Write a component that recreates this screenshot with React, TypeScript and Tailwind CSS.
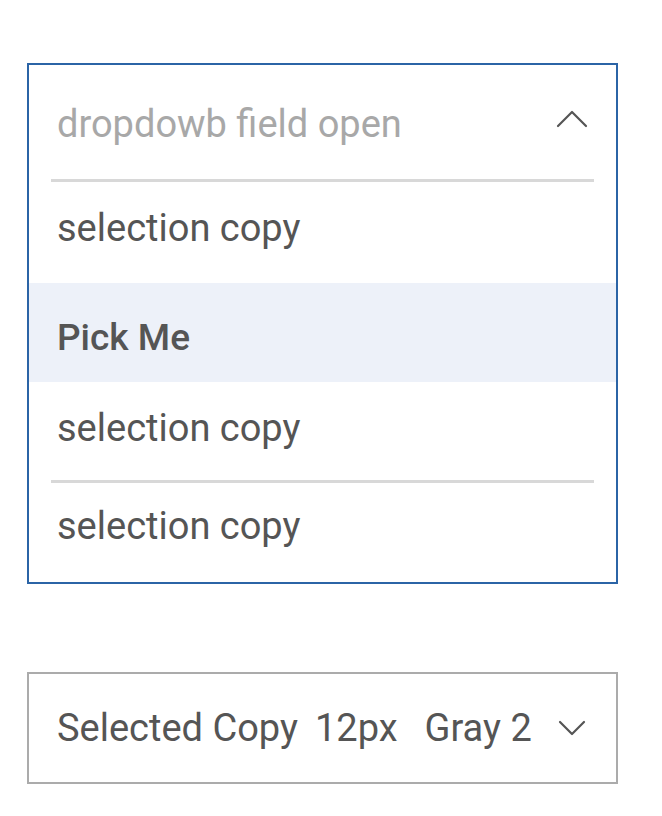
import React from "react";

const ChevronUp = () => (
  <svg width="32" height="18" viewBox="0 0 32 18" fill="none" className="shrink-0">
    <path d="M2 16 L16 2 L30 16" stroke="#555555" strokeWidth="2.2" strokeLinecap="round" strokeLinejoin="round" />
  </svg>
);

const ChevronDown = () => (
  <svg width="28" height="16" viewBox="0 0 28 16" fill="none" className="shrink-0">
    <path d="M2 2 L14 14 L26 2" stroke="#555555" strokeWidth="2.2" strokeLinecap="round" strokeLinejoin="round" />
  </svg>
);

export default function App() {
  return (
    <div
      className="w-[662px] h-[816px] bg-white pt-[63px] px-[27px]"
      style={{ fontFamily: "Roboto, 'Liberation Sans', sans-serif" }}
    >
      <div className="w-[591px] border-2 border-[#2b64a6] flex flex-col">
        <div className="h-[114px] flex items-center justify-between pl-[28px] pr-[28px]">
          <span className="text-[38px] text-[#a8a8a8] leading-none pt-[4px]">dropdowb field open</span>
          <div className="pb-[6px]">
            <ChevronUp />
          </div>
        </div>
        <div className="mx-[22px] h-[3px] bg-[#d8d8d8]" />
        <div className="h-[101px] flex items-center pl-[28px] pb-[10px]">
          <span className="text-[38px] text-[#555555] leading-none">selection copy</span>
        </div>
        <div className="h-[99px] flex items-center pl-[28px] pt-[10px] bg-[#edf1f9]">
          <span className="text-[37px] text-[#555555] leading-none font-medium">Pick Me</span>
        </div>
        <div className="h-[98px] flex items-center pl-[28px] pb-[6px]">
          <span className="text-[38px] text-[#555555] leading-none">selection copy</span>
        </div>
        <div className="mx-[22px] h-[3px] bg-[#d8d8d8]" />
        <div className="h-[99px] flex items-center pl-[28px] pb-[14px]">
          <span className="text-[38px] text-[#555555] leading-none">selection copy</span>
        </div>
      </div>

      <div className="mt-[88px] w-[591px] h-[112px] border-2 border-[#ababab] flex items-center justify-between pl-[28px] pr-[30px]">
        <div className="flex items-center text-[38px] text-[#555555] leading-none">
          <span>Selected Copy</span>
          <span className="ml-[17px]">12px</span>
          <span className="ml-[27px]">Gray 2</span>
        </div>
        <ChevronDown />
      </div>
    </div>
  );
}
